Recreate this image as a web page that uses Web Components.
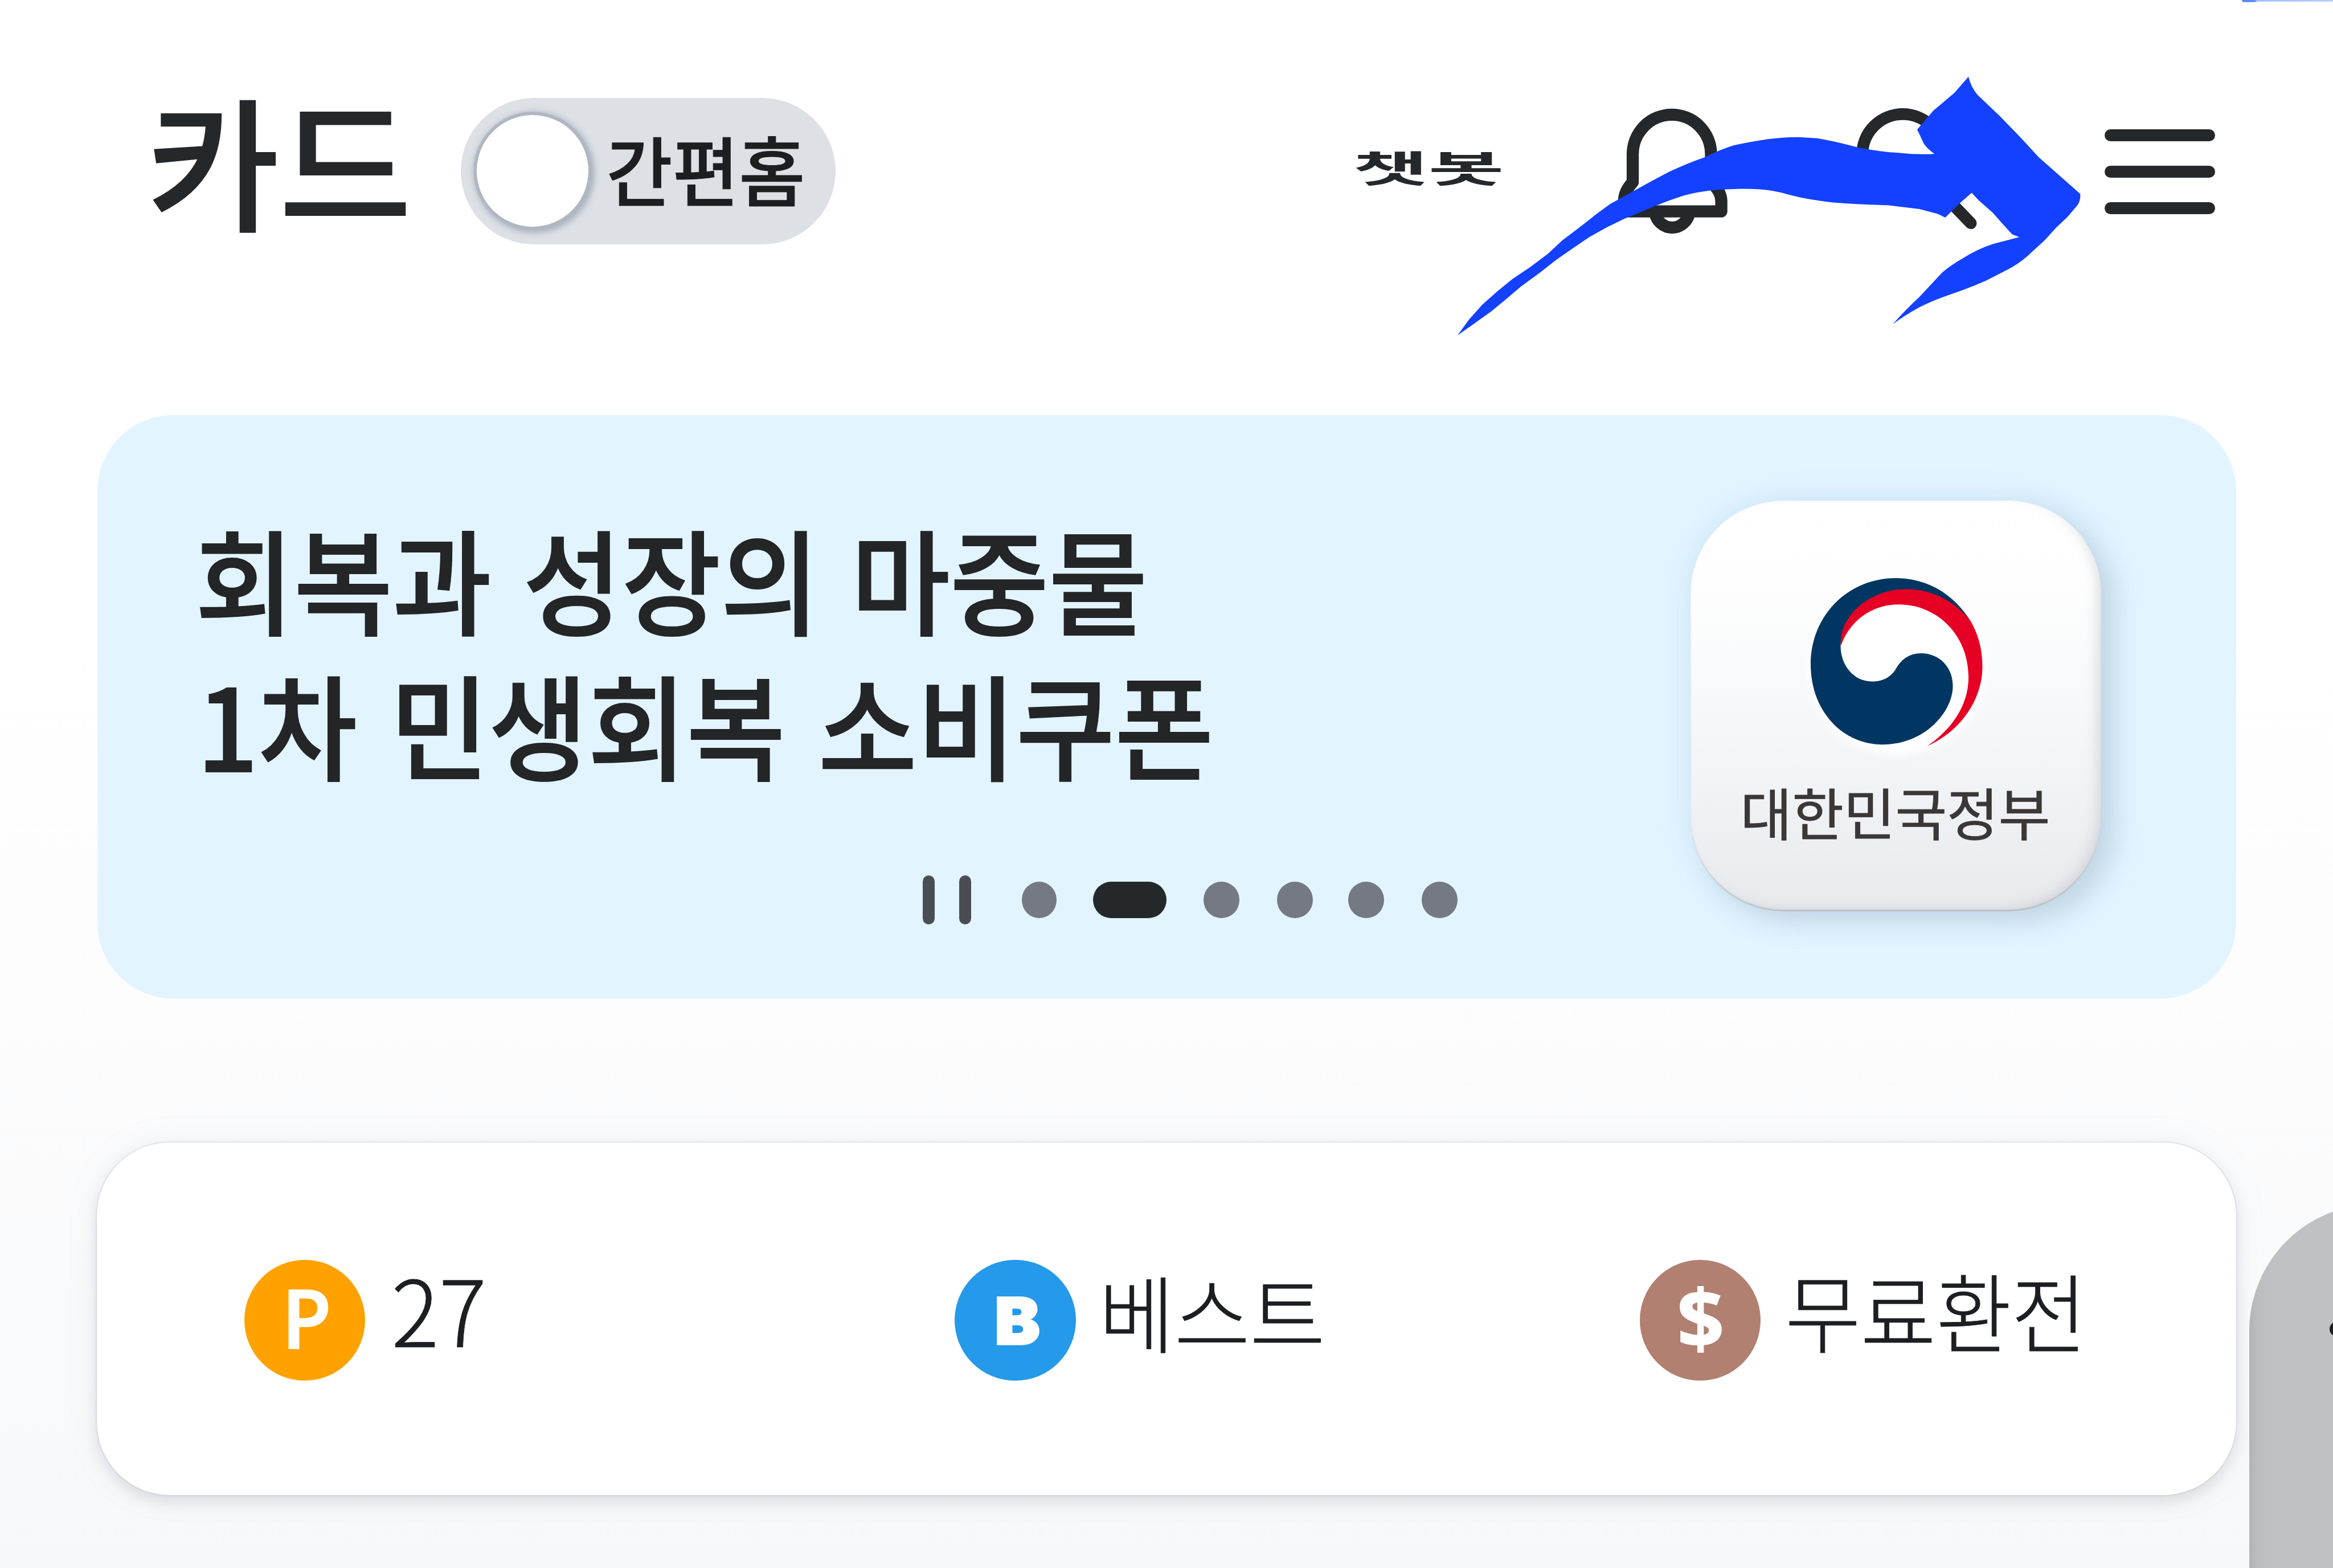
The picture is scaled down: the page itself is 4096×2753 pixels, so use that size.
<!DOCTYPE html>
<html lang="ko">
<head>
<meta charset="utf-8">
<title>카드</title>
<style>
html,body{margin:0;padding:0;background:#fff}
body{width:4096px;height:2753px;overflow:hidden;font-family:"Noto Sans CJK KR","Noto Sans",sans-serif;color:#25282b}
</style>
</head>
<body>
<card-home></card-home>
<script>
const define = (name, html, setup) => {
  const t = document.createElement('template');
  t.innerHTML = html;
  customElements.define(name, class extends HTMLElement {
    constructor() {
      super();
      this.attachShadow({ mode: 'open' }).appendChild(t.content.cloneNode(true));
    }
    connectedCallback() { if (setup) setup(this, this.shadowRoot); }
  });
};

/* Text whose glyph ink fills a w x h box exactly. */
const ctx = document.createElement('canvas').getContext('2d');
define('ink-text', `<style>
:host{display:block;flex:none}
span{display:block;width:max-content;white-space:pre;transform-origin:0 0}
</style><span><slot></slot></span>`, (el, root) => {
  const a = n => el.getAttribute(n);
  const w = +a('w'), h = +a('h'), F = 200, L = 300;
  const weight = a('weight') || 400;
  const family = a('family') || '"Noto Sans CJK KR"';
  const stroke = +(a('stroke') || 0), gap = +(a('gap') || 0);
  ctx.font = `${weight} ${F}px ${family}, sans-serif`;
  ctx.wordSpacing = gap + 'px';
  const m = ctx.measureText(el.textContent);
  const s = root.querySelector('span').style;
  s.font = `${weight} ${F}px/${L}px ${family}, sans-serif`;
  s.wordSpacing = gap + 'px';
  s.height = L + 'px';
  s.marginBottom = -L + 'px';
  const advance = root.querySelector('span').offsetWidth;
  const drift = advance && Math.abs(advance - m.width) > 2 ? advance - m.width : 0;
  const iw = m.actualBoundingBoxLeft + m.actualBoundingBoxRight + drift;
  const ih = m.actualBoundingBoxAscent + m.actualBoundingBoxDescent;
  const A = m.fontBoundingBoxAscent, D = m.fontBoundingBoxDescent;
  const base = (L - A - D) / 2 + A;
  const sx = (w - stroke) / iw, sy = (h - stroke) / ih;
  el.style.width = w + 'px';
  el.style.height = h + 'px';
  if (stroke) s.webkitTextStroke = stroke / Math.sqrt(sx * sy) + 'px currentColor';
  s.transform = `translate(${stroke / 2 + m.actualBoundingBoxLeft * sx}px,${stroke / 2 - (base - m.actualBoundingBoxAscent) * sy}px) scale(${sx},${sy})`;
});

define('mode-toggle', `<style>
:host{display:flex;align-items:flex-start;flex:none;box-sizing:border-box;width:694px;height:271px;border-radius:136px;background:#dde1e6;padding:32px 0 0 30px}
i{width:207px;height:207px;border-radius:50%;background:#fff;flex:none;box-shadow:0 0 0 6px #b0b7c2,3px 3px 12px 8px #a6aebb}
slot{display:block}
div{margin:40px 0 0 38px;color:#1d1e20}
</style><i></i><div><slot></slot></div>`);

define('bell-icon', `<style>:host{display:block;flex:none;width:204px;height:240px}svg{display:block;overflow:visible}</style>
<svg width="204" height="240" viewBox="2995 199 204 240" fill="none" stroke="#25282b" stroke-width="22.5" stroke-linejoin="round">
<path d="M3007 390H3187V371Q3187 353 3168 336V284A72.500 73 0 0 0 3023 284V336Q3007 353 3007 371Z"/>
<path d="M3064 392A32.500 34 0 0 0 3128 392"/></svg>`);

define('search-icon', `<style>:host{display:block;flex:none;width:222px;height:230px}svg{display:block;overflow:visible}</style>
<svg width="222" height="230" viewBox="3439 199 222 230" fill="none" stroke="#25282b" stroke-width="22" stroke-linecap="round">
<circle cx="3523" cy="286" r="75"/><path d="M3576 337L3649 413"/></svg>`);

define('menu-icon', `<style>:host{display:flex;flex-direction:column;gap:44.500px;flex:none;width:205px}
i{height:23px;border-radius:11px;background:#25282b}</style><i></i><i></i><i></i>`);

define('app-header', `<style>
:host{display:flex;align-items:flex-start;height:769px;padding-left:283px;box-sizing:border-box}
ink-text.t{margin-top:186px}
mode-toggle{margin:181px 0 0 101px}
ink-text.c{margin:281px 0 0 963px}
bell-icon{margin:200px 0 0 216px}
search-icon{margin:199px 0 0 240px}
menu-icon{margin:239px 0 0 236px}
</style>
<ink-text class="t" w="469" h="247" weight="500" stroke="2">카드</ink-text>
<mode-toggle><ink-text w="358" h="130" weight="500" stroke="1">간편홈</ink-text></mode-toggle>
<ink-text class="c" w="269" h="63" weight="700">챗봇</ink-text>
<bell-icon></bell-icon><search-icon></search-icon><menu-icon></menu-icon>`);

define('gov-tile', `<style>
:host{display:flex;flex-direction:column;align-items:center;flex:none;box-sizing:border-box;width:761px;height:761px;border-radius:172px;padding-top:144px;
background:linear-gradient(#fff 0%,#fefefe 20%,#f9fafb 42%,#f3f4f7 66%,#ebedf1 88%,#e7e9ed 100%);
box-shadow:inset -14px -8px 22px -6px rgba(150,155,165,.3),inset 0 -3px 3px -1px rgba(130,135,145,.5),26px 20px 46px rgba(150,170,185,.34),0 0 60px rgba(170,205,235,.3)}
svg{display:block;overflow:visible;margin-left:3px}
ink-text{margin-top:79px;margin-left:2px;color:#3b3736}
</style>
<svg width="318" height="311" viewBox="497 346 580 567">
<defs><filter id="g" x="-20%" y="-20%" width="140%" height="140%"><feGaussianBlur stdDeviation="12"/></filter></defs>
<circle cx="790" cy="640" r="302" fill="#fff" filter="url(#g)"/>
<path fill="#003661" d="M1035 488C980 400 890 346 785 346C620 346 497 475 497 638C497 790 600 908 740 908C880 908 977 800 977 710C977 645 930 600 870 600C828 600 802 623 785 652C767 682 738 695 703 695C642 695 598 640 598 575C600 485 700 395 820 395C905 395 985 435 1035 488Z"/>
<path fill="#e60024" d="M1035 488C1062 532 1077 585 1077 645C1077 755 1005 862 891 913C975 855 1030 775 1030 680C1030 540 925 435 795 435C700 435 628 492 599 575C590 480 690 383 820 383C905 383 985 425 1035 488Z"/>
</svg>
<ink-text w="561" h="96" weight="400" stroke="1">대한민국정부</ink-text>`);

define('slide-pager', `<style>
:host{display:flex;align-items:center;height:91px}
i{flex:none;width:66px;height:67px;border-radius:50%;background:#747982}
b{flex:none;width:22px;height:91px;border-radius:11px;background:#4a4e52}
b+b{margin-left:45px}
</style><b></b><b></b>
<i style="margin-left:94px;width:64px"></i><i style="margin-left:68px;width:136px;border-radius:34px;background:#25282b"></i>
<i style="margin-left:69px"></i><i style="margin-left:70px"></i><i style="margin-left:66px"></i><i style="margin-left:70px"></i>`);

define('promo-banner', `<style>
:host{display:flex;align-items:flex-start;box-sizing:border-box;width:3961px;height:1080px;margin-left:180px;border-radius:140px;background:#e2f4ff}
.l{width:2950px;display:flex;flex-direction:column;align-items:flex-start;color:#232527}
.a{margin:215px 0 0 190px}.b{margin:72px 0 0 200px}
slide-pager{margin:171px 0 0 1529px}
gov-tile{margin-top:158px}
</style>
<div class="l"><ink-text class="a" w="1747" h="197" weight="500" gap="3" stroke="2">회복과 성장의 마중물</ink-text>
<ink-text class="b" w="1860" h="197" weight="500" gap="5" stroke="2">1차 민생회복 소비쿠폰</ink-text>
<slide-pager></slide-pager></div>
<gov-tile></gov-tile>`);

define('benefit-item', `<style>
:host{display:flex;align-items:flex-start;flex:none}
.o{width:224px;height:224px;border-radius:50%;background:var(--c);color:#fff;box-sizing:border-box;padding:var(--p);flex:none;margin-top:27px}
</style><div class="o"><slot name="mark"></slot></div><slot></slot>`);

define('benefit-card', `<style>
:host{display:flex;align-items:flex-start;box-sizing:border-box;width:3962px;height:653px;margin:267px 0 0 179px;padding:190px 0 0 273px;border-radius:135px;background:#fff;color:#1c1e22;
box-shadow:0 0 3px rgba(120,125,135,.45),0 12px 26px rgba(120,130,150,.2),0 0 60px rgba(150,160,180,.1)}
</style>
<benefit-item style="--c:#ffa200;--p:53px 0 0 82px"><ink-text slot="mark" w="74" h="112" weight="600" family='"Noto Sans"'>P</ink-text><ink-text style="margin:66px 0 0 55px" w="163" h="123" weight="300" stroke="1">27</ink-text></benefit-item>
<benefit-item style="margin-left:874px;--c:#259aea;--p:67px 0 0 78px"><ink-text slot="mark" w="79" h="91" weight="900" family="Inter" stroke="4">B</ink-text><ink-text style="margin:60px 0 0 56px" w="398" h="140" weight="300" stroke="1">베스트</ink-text></benefit-item>
<benefit-item style="margin-left:590px;--c:#b18071;--p:50px 0 0 74px"><ink-text slot="mark" w="78" h="124" weight="800" family='"Noto Sans"'>$</ink-text><ink-text style="margin:55px 0 0 53px" w="535" h="145" weight="300" stroke="1">무료환전</ink-text></benefit-item>`);

define('side-handle', `<style>
:host{position:absolute;left:4165px;top:2230px;width:400px;height:760px;border-radius:235px 0 0 0;background:linear-gradient(90deg,#b2b3b5 0,#bcbdc0 14px,#c0c1c4 45px);box-sizing:border-box;padding:218px 0 0 149px}
i{display:block;width:26px;height:26px;border-radius:50%;background:#1e1f21}
</style><i></i>`);

define('marker-arrow', `<style>:host{position:absolute;left:0;top:0;width:4320px;height:700px}svg{display:block}</style>
<svg width="4320" height="700" viewBox="0 0 4320 700" fill="#1341ff">
<defs><linearGradient id="e" x1="0" x2="1" y1="0" y2="0"><stop offset="0" stop-color="#5585ff"/><stop offset=".14" stop-color="#5f8eff"/><stop offset=".17" stop-color="#a3bdff"/><stop offset="1" stop-color="#b9cbff"/></linearGradient></defs>
<path transform="translate(0 2)" d="M2699 619L2720 590L2745 562L2772 538L2800 515L2833 493L2866 468L2893 443L2926 418L2954 396L2981 376L3030 349Q3060 332 3091 316Q3125 300 3157 289Q3185 275 3211 267Q3245 260 3272 256Q3300 252 3330 252L3365 254Q3400 260 3440 271Q3480 279 3515 281Q3550 285 3582 283Q3564 270 3560 259Q3555 248 3550 238L3580 203L3600 186L3619 170L3645 140Q3650 160 3662 174L3703 213L3740 251L3775 289Q3800 311 3852 357Q3853 370 3846 379L3828 400L3807 420L3786 443L3762 465Q3742 485 3716 498L3677 518Q3645 532 3612 543Q3580 554 3554 567Q3527 582 3505 598Q3530 570 3554 548L3596 503Q3612 489 3635 476Q3662 459 3690 450L3739 437L3726 432L3706 410L3690 392L3664 369L3651 355L3628 375L3602 401L3588 394L3554 385L3495 378Q3440 377 3394 373Q3340 367 3300 355Q3270 348 3244 348Q3205 347 3173 350Q3145 353 3118 360Q3090 369 3063 380Q3035 392 3008 403L2975 419L2943 437L2915 456L2882 479L2850 504L2817 528L2790 551L2762 574L2730 597Z"/>
<path fill="url(#e)" d="M4151 0H4320V3H4182L4176 4H4153Z"/></svg>`);

define('card-home', `<style>
:host{display:flex;flex-direction:column;position:relative;width:4320px;height:2904px;zoom:.948148;overflow:hidden;background:linear-gradient(#fff 0,#fff 1150px,#fcfcfd 1950px,#f7f8f9 2904px)}
</style>
<app-header></app-header><promo-banner></promo-banner><benefit-card></benefit-card>
<side-handle></side-handle><marker-arrow></marker-arrow>`);
</script>
</body>
</html>
